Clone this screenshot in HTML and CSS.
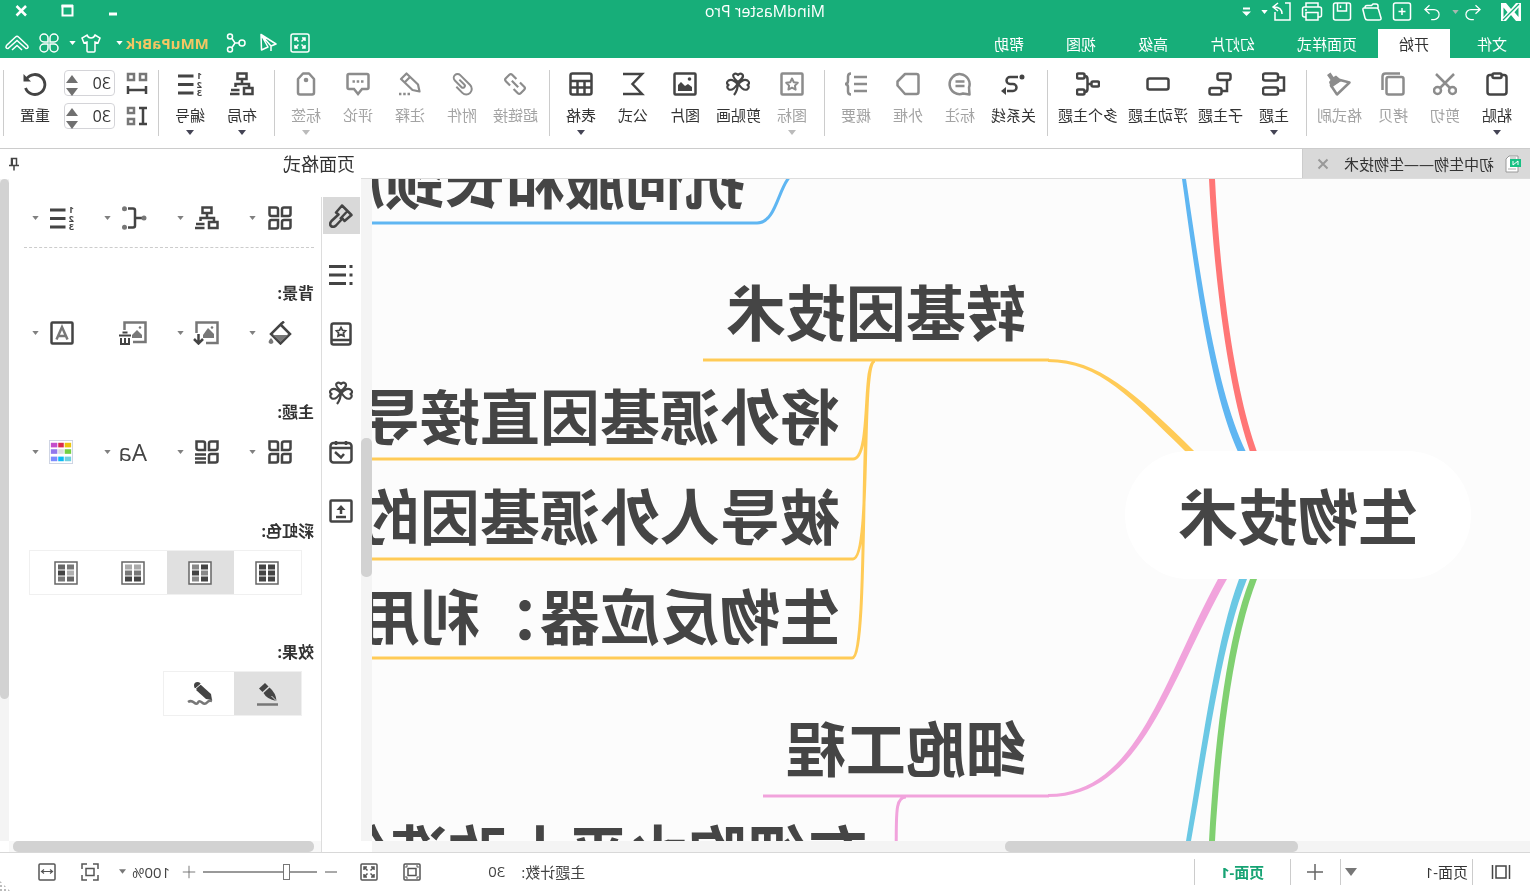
FILE: index.html
```html
<!DOCTYPE html>
<html lang="zh-CN">
<head>
<meta charset="utf-8">
<title>MindMaster Pro</title>
<link rel="stylesheet" href="styles.css">
</head>
<body>
<svg class="sprite" aria-hidden="true">
  <!-- title bar -->
  <symbol id="logo" viewBox="0 0 24 24"><path d="M2 3h5l5 6 5-6h5v18h-5l-5-6-5 6H2z" fill="#fff" stroke="none"/><path d="M4.500 7.500v9.500l4-4.700zM19.500 7.500v9.500l-4-4.700z" fill="#17ae79" stroke="none"/><path d="M4 4l16 16" stroke="#17ae79" stroke-width="1.200"/></symbol>
  <symbol id="undo" viewBox="0 0 24 24"><path d="M9 4L3.500 9l5.500 5M4 9h10.500a6 6 0 0 1 0 12H11" /></symbol>
  <symbol id="redo" viewBox="0 0 24 24"><path d="M15 4l5.500 5-5.500 5M20 9H9.500a6 6 0 0 0 0 12H13"/></symbol>
  <symbol id="new" viewBox="0 0 24 24"><rect x="3.500" y="3" width="17" height="17" rx="2"/><path d="M12 8v7M8.500 11.500h7"/></symbol>
  <symbol id="folder" viewBox="0 0 24 24"><path d="M5.500 9.500q.5-1.500 2-1.500H20q1.500 0 1 2l-2 8q-.5 2-2.500 2H5q-2.500 0-2-2zM6 8V6q0-2 2-2h3l1.500 1.500H17q2 0 2 2"/></symbol>
  <symbol id="save" viewBox="0 0 24 24"><rect x="3.500" y="3" width="17" height="17" rx="2"/><path d="M7.500 3v8h9V3M13.500 5.500V8"/></symbol>
  <symbol id="print" viewBox="0 0 24 24"><path d="M6 7V3h12v4M6 17H4.500q-2 0-2-2V9q0-2 2-2h15q2 0 2 2v6q0 2-2 2H18M6 12.500h12V20H6zM17 10h2"/></symbol>
  <symbol id="export" viewBox="0 0 24 24"><path d="M9 3H4v17h15v-8M12 14q0-7 8-7M16 3l5 4-5 4"/></symbol>
  <symbol id="min" viewBox="0 0 24 24"><path d="M8 14h8" stroke-width="3"/></symbol>
  <symbol id="max" viewBox="0 0 24 24"><rect x="6.500" y="6" width="10" height="9.500"/><path d="M6 6h11.500" stroke-width="3"/></symbol>
  <symbol id="close" viewBox="0 0 24 24"><path d="M7 6l9.500 9.500m0-9.500L7 15.500" stroke-width="2.500"/></symbol>
  <symbol id="expand" viewBox="0 0 24 24"><rect x="3" y="3" width="18" height="18" rx="2"/><path d="M7 10V7h3M14 7h3v3M17 14v3h-3M10 17H7v-3M7 7l3.500 3.500M17 7l-3.500 3.500M17 17l-3.500-3.500M7 17l3.500-3.500"/></symbol>
  <symbol id="send" viewBox="0 0 24 24"><path d="M19 3.500L4 13l5 2 10-11.500L18.500 19 12 16zM9 15v5" stroke-linejoin="round"/></symbol>
  <symbol id="share" viewBox="0 0 24 24"><circle cx="6" cy="12" r="3"/><circle cx="18" cy="5.500" r="2.500"/><circle cx="18" cy="18.500" r="2.500"/><path d="M9 12h4l3-4.500M13 12l3 4.500"/></symbol>
  <symbol id="shirt" viewBox="0 0 24 24"><path d="M8 4L3 7l2 5 3-1v9q0 1 1 1h6q1 0 1-1v-9l3 1 2-5-5-3q-1 3-4 3T8 4z"/></symbol>
  <symbol id="cmd" viewBox="0 0 24 24"><path d="M11 8V7a4 4 0 1 0-4 4h4zM13 8V7a4 4 0 1 1 4 4h-4zM11 15v2a4 4 0 1 1-4-4h4zM13 15v2a4 4 0 1 0 4-4h-4z"/></symbol>
  <symbol id="collapse" viewBox="0 0 24 24"><path d="M1.500 14.500L10.500 6q1.500-1.500 3 0l9 8.500q1.500 3-1.500 3L12 9.500l-9 8q-3 0-1.500-3zM7 19l5-4.500 5 4.500"/></symbol>
  <symbol id="more" viewBox="0 0 10 10"><path d="M1 1.500h7" /><path d="M0 4.500h9L4.500 9z" fill="#fff" stroke="none"/></symbol>
  <symbol id="caret" viewBox="0 0 8 5"><path d="M0 0h8L4 5z" fill="currentColor" stroke="none"/></symbol>
  <symbol id="caret-up" viewBox="0 0 12 8"><path d="M0 8h12L6 0z" fill="currentColor" stroke="none"/></symbol>
  <symbol id="caret-down" viewBox="0 0 12 8"><path d="M0 0h12L6 8z" fill="currentColor" stroke="none"/></symbol>
  <!-- ribbon -->
  <symbol id="paste" viewBox="0 0 24 24"><rect x="2.500" y="3" width="19" height="19.500" rx="2.500"/><rect x="7.500" y="1.500" width="9" height="4.500" rx="1.500" fill="#fff"/></symbol>
  <symbol id="cut" viewBox="0 0 24 24"><circle cx="4.500" cy="18.500" r="3.500"/><circle cx="19.500" cy="18.500" r="3.500"/><path d="M3 2l14 14M21 2L7 16"/></symbol>
  <symbol id="copy" viewBox="0 0 24 24"><rect x="1.500" y="5" width="17" height="17.500" rx="2"/><path d="M5 1.500h14.500q3 0 3 3V18"/></symbol>
  <symbol id="painter" viewBox="0 0 24 24"><path d="M11 8L1.500 10.500 14 22.500l6-9z" stroke-linejoin="round"/><path d="M9 8.500l6-5 2.500 1.500 3-4.500L24 3l-3.500 5 1.500 2-2 6z" fill="currentColor" stroke="none"/></symbol>
  <symbol id="topic" viewBox="0 0 24 24"><rect x="8" y="1.500" width="15" height="7" rx="2"/><rect x="8" y="15.500" width="15" height="7" rx="2"/><path d="M8 5.500H2v13h6"/></symbol>
  <symbol id="subtopic" viewBox="0 0 24 24"><rect x="1.500" y="1.500" width="13" height="6.500" rx="2"/><rect x="10.500" y="16" width="12" height="6.500" rx="2"/><path d="M5 8v11h5.500"/></symbol>
  <symbol id="floating" viewBox="0 0 24 24"><rect x="1.500" y="6.500" width="21" height="11" rx="2"/></symbol>
  <symbol id="multi" viewBox="0 0 24 24"><rect x="1" y="9.500" width="7.500" height="5" rx="1.500"/><rect x="15.500" y="1.500" width="7.500" height="5" rx="1.500"/><rect x="15.500" y="17.500" width="7.500" height="5" rx="1.500"/><path d="M9 12h4M15.500 4q-3 0-3 3v10q0 3 3 3"/></symbol>
  <symbol id="relation" viewBox="0 0 24 24"><circle cx="3" cy="5" r="2.500" fill="currentColor" stroke="none"/><path d="M7 5h8a3.500 3.500 0 0 1 0 7h-3a3.500 3.500 0 0 0 0 7h6"/><path d="M19 15l5 4-5 4z" fill="currentColor" stroke="none"/></symbol>
  <symbol id="callout" viewBox="0 0 24 24"><path d="M2.500 22.500l.5-7A10 10 0 1 1 9 21.500z" stroke-linejoin="round"/><path d="M7.500 9.500h9M7.500 14h9"/></symbol>
  <symbol id="boundary" viewBox="0 0 24 24"><path d="M3.500 2H15l7.500 7.500v4L15 22H3.500q-2 0-2-2V4q0-2 2-2z" stroke-linejoin="round"/></symbol>
  <symbol id="summary" viewBox="0 0 24 24"><path d="M1 5h13M1 12h13M1 19h13M17 1.500q3 0 3 3V9q0 3 3 3-3 0-3 3v4.500q0 3-3 3"/></symbol>
  <symbol id="staricon" viewBox="0 0 24 24"><rect x="1.500" y="1.500" width="21" height="21" rx="1"/><path d="M12 6.500l1.800 3.700 4 .6-2.900 2.800.7 4-3.600-1.900-3.600 1.900.7-4-2.900-2.800 4-.6z" stroke-linejoin="round" stroke-width="2"/></symbol>
  <symbol id="clover" viewBox="0 0 24 24"><path d="M12 10C8 7 6 5 7.500 2.500Q10 .5 12 3q2-2.500 4.500-.5Q18 5 12 10zM11.500 12C8 8 5 7 2.500 8.500 0 10.500 1 12 2.500 13 1 14 .5 16 3 17.500q4 1.500 8.500-5.500zM12.500 12C16 8 19 7 21.500 8.500 24 10.500 23 12 21.500 13c1.500 1 2 3-.5 4.500q-4 1.500-8.500-5.500zM12 10q0 8 4 13" stroke-linejoin="round" stroke-width="2.200"/></symbol>
  <symbol id="picture" viewBox="0 0 24 24"><rect x="1.500" y="1.500" width="21" height="21" rx="1"/><path d="M5 19v-4l4-3 3 2 4-4 3 3v6z" fill="currentColor" stroke="none"/><circle cx="7.500" cy="7" r="1.800" fill="currentColor" stroke="none"/></symbol>
  <symbol id="sigma" viewBox="0 0 24 24"><path d="M22 2H3l9.500 10L3 22h19"/></symbol>
  <symbol id="table" viewBox="0 0 24 24"><rect x="1.500" y="1.500" width="21" height="21" rx="2"/><path d="M2 9h20M2 15.500h20M8.500 9v13M15.500 9v13"/></symbol>
  <symbol id="link" viewBox="0 0 24 24"><path d="M9.500 7.500h-6q-2 0-2 2v5q0 2 2 2h6M14.500 7.500h6q2 0 2 2v5q0 2-2 2h-6M7.500 12h9" transform="rotate(-45 12 12)" stroke-width="2.200"/></symbol>
  <symbol id="clip" viewBox="0 0 24 24"><path d="M14 18H5.500a5.500 5.500 0 0 1 0-11H19.500a3.800 3.800 0 0 1 0 7.600H10a1.800 1.800 0 0 1 0-3.800h7" transform="rotate(-45 12 12)" stroke-width="2"/></symbol>
  <symbol id="pencil" viewBox="0 0 24 24"><path d="M2.500 19.500l1.500-7L15.500 1.500l5.500 5.500L9.500 18zM12 5l5.500 5.500" stroke-linejoin="round" stroke-width="2.200"/><path d="M12 22h11" stroke-dasharray="2.500 1.800"/></symbol>
  <symbol id="comment" viewBox="0 0 24 24"><path d="M3 2h18q1.500 0 1.500 1.500v12q0 1.500-1.500 1.500h-5l-4 5-4-5H3q-1.500 0-1.500-1.500v-12Q1.500 2 3 2z"/><path d="M6.500 9.500h11" stroke-dasharray="2.500 1.800"/></symbol>
  <symbol id="tag" viewBox="0 0 24 24"><path d="M4 7l5-5.500h6L20 7v13.500q0 2-2 2H6q-2 0-2-2z" stroke-linejoin="round"/><circle cx="12" cy="8" r="2.300" fill="currentColor" stroke="none"/></symbol>
  <symbol id="layout" viewBox="0 0 24 24"><rect x="7.500" y="1.500" width="9" height="5.500"/><path d="M12 7v5M5 16v-4h13.500v3M14.500 18H23M14.500 22H24"/><rect x="1.500" y="16" width="8.500" height="6"/></symbol>
  <symbol id="numbered" viewBox="0 0 24 24"><path d="M8.500 4H24M8.500 12.500H24M8.500 21H24" stroke-width="3"/><g fill="currentColor" stroke="none" font-family="Open Sans, sans-serif" font-size="9" font-weight="700"><text x="0" y="7">1</text><text x="0" y="15.500">2</text><text x="0" y="24">3</text></g></symbol>
  <symbol id="gap-h" viewBox="0 0 24 24"><g stroke="#777"><rect x="3" y="3" width="6" height="6"/><rect x="15" y="3" width="6" height="6"/></g><path d="M3 15v8M21 15v8M3 19h18"/></symbol>
  <symbol id="gap-v" viewBox="0 0 24 24"><g stroke="#777"><rect x="15" y="4" width="6" height="5"/><rect x="15" y="15" width="6" height="5"/></g><path d="M2 4h8M2 20h8M6 4v16"/></symbol>
  <symbol id="reset" viewBox="0 0 24 24"><path d="M3.500 7a10 10 0 1 1-1 9" stroke-width="2.800" transform="matrix(-1 0 0 1 24 0)"/><path d="M23.500 2v7.500H16z" fill="currentColor" stroke="none"/></symbol>
  <!-- document tab and panel -->
  <symbol id="doc" viewBox="0 0 16 18"><path d="M3 1h9l3 3v13H3z" fill="#fff" stroke="#999"/><path d="M5 3h6M5 14h8" stroke="#aaa"/><rect x="0" y="4" width="11" height="8" fill="#17c184" stroke="none"/><path d="M3 10V6l5 4V6" stroke="#fff"/></symbol>
  <symbol id="x" viewBox="0 0 12 12"><path d="M1.500 1.500l9 9m0-9l-9 9"/></symbol>
  <symbol id="pin" viewBox="0 0 12 14"><path d="M3.500 1.500h5v7h-5zM1 8.500h10M6 9v4.500" stroke-width="1.500"/><path d="M8 1v7"/></symbol>
  <symbol id="brush" viewBox="0 0 24 24"><path d="M11 1.500l6 7-2.500 2 7 6.500q2.500 3 .5 5t-5-.5l-6.500-7-2 2.500-7-6zM5.500 7l7.500 8" stroke-linejoin="round"/></symbol>
  <symbol id="outline" viewBox="0 0 24 24"><path d="M7 3.500h17M7 12h17M7 20.500h17" stroke-width="3"/><path d="M.5 3.500h3M.5 12h3M.5 20.500h3" stroke-width="3"/></symbol>
  <symbol id="starbook" viewBox="0 0 24 24"><rect x="2.500" y="1.500" width="19" height="21" rx="2"/><path d="M3 18h18"/><path d="M12 5.500l1.500 2.800 3 .5-2.100 2.200.5 3-2.900-1.400L9.100 14l.5-3-2.100-2.200 3-.5z" stroke-width="1.800"/></symbol>
  <symbol id="calendar" viewBox="0 0 24 24"><rect x="1.500" y="3" width="21" height="19.500" rx="3"/><path d="M2 8h20M7 1v4M17 1v4M18 12l-6 5.500-3-3.500"/></symbol>
  <symbol id="upload" viewBox="0 0 24 24"><rect x="1.500" y="1.500" width="21" height="21" rx="1"/><path d="M12 15V8M7 18h10"/><path d="M7.500 11L12 6l4.500 5z" fill="currentColor" stroke="none"/></symbol>
  <symbol id="grid4" viewBox="0 0 24 24"><path d="M1.500 1.500h6.500q2 0 2 2V10H3.500q-2 0-2-2zM14 3.500q0-2 2-2h6.500V8q0 2-2 2H14zM1.500 14H8q2 0 2 2v6.500H3.500q-2 0-2-2zM14 14h6.500q2 0 2 2v6.500H16q-2 0-2-2z"/></symbol>
  <symbol id="gridlist" viewBox="0 0 24 24"><path d="M1.500 1.500h6.500q2 0 2 2V10H3.500q-2 0-2-2zM14 3.500q0-2 2-2h6.500V8q0 2-2 2H14zM1.500 14H8q2 0 2 2v6.500H3.500q-2 0-2-2zM13 14.500h11M13 18.500h11M13 22.500h11"/></symbol>
  <symbol id="branch" viewBox="0 0 26 24"><path d="M5 12h6M19 2.500h-5q-2 0-2 2v15q0 2 2 2h5"/><g fill="#777" stroke="none"><circle cx="3" cy="12" r="2.500"/><circle cx="22.500" cy="2.800" r="2.500"/><circle cx="22.500" cy="21.200" r="2.500"/></g></symbol>
  <symbol id="fill" viewBox="0 0 24 24"><path d="M11.500 3.500L2 13l9.500 9.500 9.500-9.500zM11.500 3.500L8 .5"/><path d="M4 14h15l-7.500 7z" fill="#777" stroke="none"/><path d="M21 17q5 5 0 6-5-1 0-6z" fill="#777" stroke="none"/></symbol>
  <symbol id="picdown" viewBox="0 0 26 24"><path d="M13 22H1.500V1.500h21V12" stroke="#777"/><path d="M5 17v-4l6-6 5 7v3z" fill="#777" stroke="none"/><circle cx="7" cy="6.500" r="1.300" fill="#777" stroke="none"/><path d="M20.500 13v9M16 18l4.500 4.500L25 18"/></symbol>
  <symbol id="picdel" viewBox="0 0 28 24"><path d="M14 21H1.500V1.500h21V9" stroke="#777"/><path d="M5 17v-3l5-5 5 5v3z" fill="#777" stroke="none"/><circle cx="7" cy="6.500" r="1.300" fill="#777" stroke="none"/><path d="M16 14.500h12M19.500 11.500h5" stroke-width="2"/><path d="M18 17v6h8v-6M22 17v6" stroke-width="2"/></symbol>
  <symbol id="letter" viewBox="0 0 24 24"><rect x="1.500" y="1.500" width="21" height="21" rx="1"/><path d="M6.500 18.500L12 6l5.500 12.500M8.500 15h7" stroke="#777"/></symbol>
  <symbol id="palette" viewBox="0 0 26 26"><rect x=".5" y=".5" width="25" height="25" fill="#fff" stroke="#ccd2e2" stroke-width="1"/><g stroke="none"><path d="M2 3h7v5H2z" fill="#ecc40d"/><path d="M10 3h6v5h-6z" fill="#d92d4e"/><path d="M17 3h7v5h-7z" fill="#c44dcb"/><path d="M2 10h7v5H2z" fill="#74cf42"/><path d="M10 10h6v5h-6z" fill="#ddd"/><path d="M17 10h7v5h-7z" fill="#9278ec"/><path d="M2 18h7v5H2z" fill="#6fcfe0"/><path d="M10 18h6v5h-6z" fill="#0bbcf2"/><path d="M17 18h7v5h-7z" fill="#7c8cff"/></g></symbol>
  <symbol id="rb-frame" viewBox="0 0 24 24"><rect x="1" y="1" width="22" height="22" fill="#fff" stroke="#666" stroke-width="1.500"/></symbol>
  <symbol id="pen" viewBox="0 0 24 24"><path d="M1 22.500h21" stroke="#777" stroke-width="2.500"/><g fill="currentColor" stroke="none"><path d="M14 1l6 5.500-3.500 3.500-6-5.500z"/><path d="M9.500 5.500l6 5.500q-3 6-13 8 .5-8 7-13.500z"/></g><path d="M2.500 19l5-5" stroke="#e0e0e0" stroke-width="1"/></symbol>
  <symbol id="sketch" viewBox="0 0 26 24"><path d="M1 19q3-1 5 1.500t5 0 4 0 4 0 6-.5" stroke="#777" stroke-width="2.500"/><path d="M2 12L12 3l5 5-10 9-6 1z" fill="currentColor" stroke="none"/><circle cx="15.500" cy="3.500" r="3.500" fill="currentColor" stroke="none"/><path d="M12 2l6 5" stroke="#fff" stroke-width="1"/></symbol>
  <!-- status bar -->
  <symbol id="pages" viewBox="0 0 20 18"><rect x="5" y="3" width="10" height="12"/><path d="M1.500 2v14M18.500 2v14"/></symbol>
  <symbol id="plus" viewBox="0 0 18 18"><path d="M9 1v16M1 9h16"/></symbol>
  <symbol id="minus" viewBox="0 0 14 14"><path d="M1 7h12"/></symbol>
  <symbol id="fitpage" viewBox="0 0 18 18"><rect x="1" y="1" width="16" height="16" rx="1"/><rect x="5" y="5.500" width="8" height="7"/><path d="M3 5V3h2M13 3h2v2M15 13v2h-2M5 15H3v-2" stroke-width="1"/></symbol>
  <symbol id="full" viewBox="0 0 18 18"><rect x="1" y="1" width="16" height="16" rx="1"/><path d="M4 7V4h3M11 4h3v3M14 11v3h-3M7 14H4v-3M4 4l3.500 3.500M14 4l-3.500 3.500M14 14l-3.500-3.500M4 14l3.500-3.500"/></symbol>
  <symbol id="focus" viewBox="0 0 18 18"><path d="M1 6V1h5M12 1h5v5M17 12v5h-5M6 17H1v-5"/><rect x="5" y="5.500" width="8" height="7"/></symbol>
  <symbol id="fitwidth" viewBox="0 0 18 18"><rect x="1" y="1" width="16" height="16" rx="1"/><path d="M3.500 8.500h11M6 6.500l-2.500 2L6 10.500M12 6.500l2.500 2-2.500 2" stroke-width="1.200"/></symbol>
</svg>

<div class="app">
  <header class="top">
    <div class="titlebar">
      <div class="quick">
        <svg class="i24"><use href="#logo"/></svg>
        <button class="q" aria-label="撤销"><svg class="i20"><use href="#undo"/></svg></button>
        <svg class="caret faint"><use href="#caret"/></svg>
        <button class="q" aria-label="重做"><svg class="i20"><use href="#redo"/></svg></button>
        <button class="q" aria-label="新建"><svg class="i24"><use href="#new"/></svg></button>
        <button class="q" aria-label="打开"><svg class="i24"><use href="#folder"/></svg></button>
        <button class="q" aria-label="保存"><svg class="i24"><use href="#save"/></svg></button>
        <button class="q" aria-label="打印"><svg class="i24"><use href="#print"/></svg></button>
        <button class="q exp" aria-label="导出"><svg class="i24"><use href="#export"/></svg><svg class="caret"><use href="#caret"/></svg></button>
        <svg class="i10"><use href="#more"/></svg>
      </div>
      <h1 class="title">MindMaster Pro</h1>
      <div class="winctl">
        <button aria-label="最小化"><svg class="i24"><use href="#min"/></svg></button>
        <button aria-label="最大化"><svg class="i24"><use href="#max"/></svg></button>
        <button aria-label="关闭"><svg class="i24"><use href="#close"/></svg></button>
      </div>
    </div>
    <div class="menubar">
      <nav class="tabs">
        <button class="tab file">文件</button><button class="tab active">开始</button><button class="tab">页面样式</button><button class="tab">幻灯片</button><button class="tab">高级</button><button class="tab">视图</button><button class="tab">帮助</button>
      </nav>
      <div class="account">
        <button aria-label="全屏"><svg class="i24"><use href="#expand"/></svg></button>
        <button aria-label="发送"><svg class="i24"><use href="#send"/></svg></button>
        <button aria-label="分享"><svg class="i24"><use href="#share"/></svg></button>
        <button class="user">MMuPaBrk <svg class="caret"><use href="#caret"/></svg></button>
        <button class="skin" aria-label="皮肤"><svg class="i24"><use href="#shirt"/></svg><svg class="caret"><use href="#caret"/></svg></button>
        <button aria-label="应用"><svg class="i24"><use href="#cmd"/></svg></button>
        <button aria-label="收起"><svg class="i24"><use href="#collapse"/></svg></button>
      </div>
    </div>
  </header>

  <section class="ribbon">
    <button class="cmd"><svg class="i24"><use href="#paste"/></svg>粘贴<svg class="caret"><use href="#caret"/></svg></button>
    <button class="cmd off"><svg class="i24"><use href="#cut"/></svg>剪切</button>
    <button class="cmd off"><svg class="i24"><use href="#copy"/></svg>拷贝</button>
    <button class="cmd off"><svg class="i24"><use href="#painter"/></svg>格式刷</button>
    <i class="sep"></i>
    <button class="cmd"><svg class="i24"><use href="#topic"/></svg>主题<svg class="caret"><use href="#caret"/></svg></button>
    <button class="cmd"><svg class="i24"><use href="#subtopic"/></svg>子主题</button>
    <button class="cmd"><svg class="i24"><use href="#floating"/></svg>浮动主题</button>
    <button class="cmd"><svg class="i24"><use href="#multi"/></svg>多个主题</button>
    <i class="sep"></i>
    <button class="cmd"><svg class="i24"><use href="#relation"/></svg>关系线</button>
    <button class="cmd off"><svg class="i24"><use href="#callout"/></svg>标注</button>
    <button class="cmd off"><svg class="i24"><use href="#boundary"/></svg>外框</button>
    <button class="cmd off"><svg class="i24"><use href="#summary"/></svg>概要</button>
    <i class="sep"></i>
    <button class="cmd off"><svg class="i24"><use href="#staricon"/></svg>图标<svg class="caret"><use href="#caret"/></svg></button>
    <button class="cmd"><svg class="i24"><use href="#clover"/></svg>剪贴画</button>
    <button class="cmd"><svg class="i24"><use href="#picture"/></svg>图片</button>
    <button class="cmd"><svg class="i24"><use href="#sigma"/></svg>公式</button>
    <button class="cmd"><svg class="i24"><use href="#table"/></svg>表格<svg class="caret"><use href="#caret"/></svg></button>
    <i class="sep"></i>
    <button class="cmd off"><svg class="i24"><use href="#link"/></svg>超链接</button>
    <button class="cmd off"><svg class="i24"><use href="#clip"/></svg>附件</button>
    <button class="cmd off"><svg class="i24"><use href="#pencil"/></svg>注释</button>
    <button class="cmd off"><svg class="i24"><use href="#comment"/></svg>评论</button>
    <button class="cmd off"><svg class="i24"><use href="#tag"/></svg>标签<svg class="caret"><use href="#caret"/></svg></button>
    <i class="sep"></i>
    <button class="cmd"><svg class="i24"><use href="#layout"/></svg>布局<svg class="caret"><use href="#caret"/></svg></button>
    <button class="cmd"><svg class="i24"><use href="#numbered"/></svg>编号<svg class="caret"><use href="#caret"/></svg></button>
    <i class="sep"></i>
    <div class="gaps">
      <label class="gap"><svg class="i24"><use href="#gap-h"/></svg><span class="spin"><input type="number" value="30" aria-label="水平间距"><span class="arrows"><svg><use href="#caret-up"/></svg><svg><use href="#caret-down"/></svg></span></span></label>
      <label class="gap"><svg class="i24"><use href="#gap-v"/></svg><span class="spin"><input type="number" value="30" aria-label="垂直间距"><span class="arrows"><svg><use href="#caret-up"/></svg><svg><use href="#caret-down"/></svg></span></span></label>
    </div>
    <button class="cmd"><svg class="i24"><use href="#reset"/></svg>重置</button>
    <i class="sep last"></i>
  </section>

  <main class="work">
    <section class="editor">
      <div class="doctabs">
        <div class="doctab"><svg class="docicon"><use href="#doc"/></svg><span>初中生物——生物技术</span><button aria-label="关闭文档"><svg class="i12"><use href="#x"/></svg></button></div>
      </div>
      <div class="stage">
        <div class="canvas">
          <svg class="wires">
            <g fill="#ff7676"><path d="M315 0C311 86 297 209 273 273H280C303 209 317 86 321 0z"/></g>
            <g fill="#5fb6f2"><path d="M344 0C331 86 315 211 284 273H292C321 211 336 86 348 0z"/></g>
            <g fill="#ffcb57"><path d="M482 180C432 180 396 213 335 273H344C400 219 430 183 482 183z"/></g>
            <g fill="#f1a3dc"><path d="M482 618C388 618 361 502 303 400H312C367 500 393 615 482 615z"/></g>
            <g fill="#6bc8e4"><path d="M283 400C308 461 322 566 339 662H344C328 566 314 461 291 400z"/></g>
            <g fill="#80d071"><path d="M273 400C297 461 310 566 315 662H321C316 566 304 461 280 400z"/></g>
            <g fill="none" stroke-width="3">
              <path d="M730-7C752-7 750 44 773 44H4000" stroke="#5fb6f2"/>
              <path d="M481 181H827M655 182C668 182 658 280 677 280H4000M655 182C670 182 658 380 677 380H4000M655 182C672 182 660 479 678 479H4000" stroke="#ffcb57"/>
              <path d="M481 617H767M624 618C636 618 633 640 634 670" stroke="#f1a3dc"/>
            </g>
          </svg>
          <div class="node root">生物技术</div>
          <div class="node n1">抗伺服和长颈鹿</div>
          <div class="node n2">转基因技术</div>
          <div class="node n3">将外源基因直接导</div>
          <div class="node n4">被导人外源基因的</div>
          <div class="node n5">生物反应器：利用</div>
          <div class="node n6">细胞工程</div>
          <div class="node n7">在细胞水平上改造细</div>
        </div>
        <div class="vtrack"><div class="vthumb"></div></div>
        <div class="htrack"><div class="hthumb"></div></div>
      </div>
    </section>

    <aside class="panel">
      <div class="phead"><h2>页面格式</h2><button aria-label="固定"><svg class="pinicon"><use href="#pin"/></svg></button></div>
      <div class="pbody">
        <nav class="rail">
          <button class="on" aria-label="格式"><svg class="i24"><use href="#brush"/></svg></button>
          <button aria-label="大纲"><svg class="i24"><use href="#outline"/></svg></button>
          <button aria-label="图标"><svg class="i24"><use href="#starbook"/></svg></button>
          <button aria-label="剪贴画"><svg class="i24"><use href="#clover"/></svg></button>
          <button aria-label="任务"><svg class="i24"><use href="#calendar"/></svg></button>
          <button aria-label="上传"><svg class="i24"><use href="#upload"/></svg></button>
        </nav>
        <div class="pcol">
          <div class="props">
            <div class="row first">
              <button class="opt"><svg class="i24"><use href="#grid4"/></svg><svg class="caret"><use href="#caret"/></svg></button>
              <button class="opt"><svg class="i24"><use href="#layout"/></svg><svg class="caret"><use href="#caret"/></svg></button>
              <button class="opt"><svg class="i26"><use href="#branch"/></svg><svg class="caret"><use href="#caret"/></svg></button>
              <button class="opt"><svg class="i24"><use href="#numbered"/></svg><svg class="caret"><use href="#caret"/></svg></button>
            </div>
            <h3>背景:</h3>
            <div class="row">
              <button class="opt"><svg class="i24"><use href="#fill"/></svg><svg class="caret"><use href="#caret"/></svg></button>
              <button class="opt"><svg class="i26"><use href="#picdown"/></svg><svg class="caret"><use href="#caret"/></svg></button>
              <button class="opt"><svg class="i28"><use href="#picdel"/></svg></button>
              <button class="opt"><svg class="i24"><use href="#letter"/></svg><svg class="caret"><use href="#caret"/></svg></button>
            </div>
            <h3>主题:</h3>
            <div class="row">
              <button class="opt"><svg class="i24"><use href="#grid4"/></svg><svg class="caret"><use href="#caret"/></svg></button>
              <button class="opt"><svg class="i24"><use href="#gridlist"/></svg><svg class="caret"><use href="#caret"/></svg></button>
              <button class="opt"><span class="aa">Aa</span><svg class="caret"><use href="#caret"/></svg></button>
              <button class="opt"><svg class="i26"><use href="#palette"/></svg><svg class="caret"><use href="#caret"/></svg></button>
            </div>
            <h3>彩虹色:</h3>
            <div class="seg">
              <button aria-label="单色"><svg class="i24" viewBox="0 0 24 24"><use href="#rb-frame"/><path d="M4 6h7M13 6h7M4 12h7M13 12h7M4 18h7M13 18h7" stroke="#444" stroke-width="5"/></svg></button>
              <button class="on" aria-label="交替"><svg class="i24" viewBox="0 0 24 24"><use href="#rb-frame"/><path d="M4 6h7M13 12h7M4 18h7" stroke="#444" stroke-width="5"/><path d="M13 6h7M4 12h7M13 18h7" stroke="#888" stroke-width="5"/></svg></button>
              <button aria-label="渐变"><svg class="i24" viewBox="0 0 24 24"><use href="#rb-frame"/><path d="M4 6h7M13 6h7" stroke="#aaa" stroke-width="5"/><path d="M4 12h7M13 12h7" stroke="#777" stroke-width="5"/><path d="M4 18h7M13 18h7" stroke="#444" stroke-width="5"/></svg></button>
              <button aria-label="多色"><svg class="i24" viewBox="0 0 24 24"><use href="#rb-frame"/><path d="M4 6h7M13 18h7" stroke="#777" stroke-width="5"/><path d="M4 12h7" stroke="#b0b0b0" stroke-width="5"/><path d="M13 6h7M4 18h7" stroke="#666" stroke-width="5"/><path d="M13 12h7" stroke="#444" stroke-width="5"/></svg></button>
            </div>
            <h3>效果:</h3>
            <div class="seg">
              <button class="on" aria-label="直线"><svg class="i24"><use href="#pen"/></svg></button>
              <button aria-label="手绘"><svg class="i26"><use href="#sketch"/></svg></button>
            </div>
          </div>
          <div class="ptrack"><div class="pthumb"></div></div>
        </div>
        <div class="pvtrack"><div class="pvthumb"></div></div>
      </div>
    </aside>
  </main>

  <footer class="status">
    <button class="pagesbtn" aria-label="页面"><svg class="pagesicon"><use href="#pages"/></svg></button>
    <label class="pagepick"><select aria-label="当前页面"><option>页面-1</option></select><svg><use href="#caret-down"/></svg></label>
    <button class="addpage" aria-label="添加页面"><svg class="i18"><use href="#plus"/></svg></button>
    <button class="pagetab">页面-1</button>
    <p class="count"><span>主题计数:</span><span>30</span></p>
    <div class="view">
      <button aria-label="适合页面"><svg class="i18 strong"><use href="#fitpage"/></svg></button>
      <button aria-label="全屏"><svg class="i18 strong"><use href="#full"/></svg></button>
      <div class="zoom">
        <button aria-label="缩小"><svg class="i14"><use href="#minus"/></svg></button>
        <input type="range" min="0" max="100" value="25" aria-label="缩放">
        <button aria-label="放大"><svg class="i14"><use href="#plus"/></svg></button>
      </div>
      <button class="pct">100% <svg class="caret"><use href="#caret"/></svg></button>
      <button aria-label="聚焦"><svg class="i18 strong"><use href="#focus"/></svg></button>
      <button aria-label="适合宽度"><svg class="i18 strong"><use href="#fitwidth"/></svg></button>
    </div>
    <i class="grip"></i>
  </footer>
</div>
</body>
</html>
```

FILE: styles.css
```css
* { box-sizing: border-box; }
body {
  margin: 0;
  font-family: "Open Sans", "Noto Sans CJK SC", sans-serif;
  font-size: 15px;
  color: #333;
  background: #fff;
  overflow: hidden;
}
button {
  font: inherit;
  color: inherit;
  background: none;
  border: 0;
  padding: 0;
  margin: 0;
}
h1, h2, h3, p { margin: 0; font-weight: 400; }
svg { display: block; flex: none; fill: none; stroke: currentColor; stroke-width: 2.5; }
.sprite { display: none; }
.i10 { width: 10px; height: 10px; stroke-width: 2; }
.i12 { width: 12px; height: 12px; stroke-width: 2; }
.i14 { width: 14px; height: 14px; stroke-width: 1; }
.i18 { width: 18px; height: 18px; stroke-width: 2; }
.i20 { width: 20px; height: 20px; }
.i24 { width: 24px; height: 24px; }
.i26 { width: 26px; height: 24px; }
.i28 { width: 28px; height: 24px; }
.caret { width: 8px; height: 5px; }

/* The whole window is shown mirrored. */
.app {
  display: flex;
  flex-direction: column;
  height: 100vh;
  transform: scaleX(-1);
}

.top { background: #17ae79; color: #fff; }
.top .i24, .top .i20 { stroke-width: 1.5; }
.titlebar {
  display: grid;
  grid-template-columns: 1fr auto 1fr;
  align-items: center;
  height: 24px;
}
.quick { display: flex; align-items: center; gap: 6px; padding-left: 7px; }
.quick .caret { width: 7px; height: 4px; }
.quick .faint { color: #a7b8b0; margin: 0 4px 0 -2px; }
.quick .faint + .q { margin-right: 2px; }
.quick > .i24 { margin-right: 10px; }
.exp { display: flex; align-items: center; gap: 2px; }
.quick .i10 { margin-left: 4px; }
.title { font-size: 16px; line-height: 22px; margin-bottom: 2px; }
.winctl { display: flex; justify-content: flex-end; gap: 22px; padding-right: 9px; }
.winctl .i24 { stroke-width: 2; }
.menubar { display: flex; justify-content: space-between; height: 34px; }
.tabs { display: flex; align-items: flex-end; padding-left: 2px; }
.tab { height: 29px; padding: 0 21px; }
.tab.file { margin-right: 6px; }
.tab.active { background: #fff; color: #333; }
.account { display: flex; align-items: center; gap: 8px; padding: 4px 5px 0 0; }
.account .caret { width: 7px; height: 4px; }
.user { display: flex; align-items: center; gap: 3px; font-size: 15px; font-weight: 700; color: #f4c663; padding: 0 5px 0 7px; }
.user .caret { color: #fff; }
.skin { display: flex; align-items: center; gap: 3px; }

.ribbon {
  display: flex;
  align-items: stretch;
  height: 91px;
  padding-left: 7px;
  border-bottom: 1px solid #ccc;
  color: #444;
}
.ribbon > * { flex-shrink: 0; }
.cmd {
  display: flex;
  flex-direction: column;
  align-items: center;
  min-width: 52px;
  padding: 14px 5px 0;
  line-height: 20px;
  color: #333;
  white-space: nowrap;
}
.cmd .i24 { margin-bottom: 9px; color: #444; }
.cmd .caret { margin-top: 5px; color: #445; }
.cmd.off { color: #a3a3a3; }
.cmd.off .i24 { color: #8c8c8c; }
.cmd.off .caret { color: #bbb; }
.sep { width: 1px; margin: 12px 6px 12px 5px; background: #ccc; }
.sep.last { margin-right: 0; }
.gaps { display: flex; flex-direction: column; gap: 7px; padding: 12px 3px 0; }
.gap { display: flex; align-items: center; gap: 10px; }
.spin {
  display: flex;
  align-items: center;
  width: 51px;
  height: 26px;
  border: 1px solid #d4d4d8;
  border-radius: 4px;
}
.spin input {
  flex: 1;
  min-width: 0;
  padding: 0 0 0 3px;
  border: 0;
  font: inherit;
  font-size: 16px;
  color: #333;
  background: none;
  appearance: textfield;
}
.spin input::-webkit-inner-spin-button { display: none; }
.arrows { display: flex; flex-direction: column; gap: 5px; padding: 4px 1px 0 0; color: #707070; }
.arrows svg { width: 12px; height: 8px; }

.work { flex: 1; display: flex; min-height: 0; }
.editor { flex: 1; display: flex; flex-direction: column; min-width: 0; }
.doctabs { display: flex; height: 30px; border-bottom: 1px solid #ddd; }
.doctab {
  display: flex;
  align-items: center;
  padding: 0 14px 0 9px;
  background: #d9d9d9;
  border-right: 1px solid #ccc;
  line-height: 28px;
  color: #333;
}
.docicon { width: 16px; height: 18px; stroke-width: 1; margin-right: 11px; }
.doctab button { margin-left: 15px; color: #999; }
.stage {
  flex: 1;
  display: grid;
  grid-template-columns: 1fr 11px;
  grid-template-rows: 1fr 11px;
  min-height: 0;
}
.canvas { position: relative; overflow: hidden; background: #fcfcfc; }
.wires { width: 100%; height: 100%; stroke: none; }
.node {
  position: absolute;
  font-family: "Noto Sans CJK SC", sans-serif;
  font-size: 60px;
  line-height: 80px;
  font-weight: 700;
  color: #454545;
  white-space: nowrap;
}
.root { left: 59px; top: 272px; padding: 23px 53px 25px; border-radius: 64px; background: #fff; }
.n1 { left: 785px; top: -41px; }
.n2 { left: 504px; top: 91px; }
.n3 { left: 690px; top: 195px; }
.n4 { left: 690px; top: 295px; }
.n5 { left: 690px; top: 395px; }
.n6 { left: 504px; top: 527px; }
.n7 { left: 662px; top: 631px; }
.vtrack { background: #f4f4f4; display: flex; flex-direction: column; }
.vtrack::before { content: ""; flex: 259; }
.vtrack::after { content: ""; flex: 264; }
.vthumb { flex: 139; border-radius: 5px; background: #d2d2d2; }
.htrack { background: #f4f4f4; display: flex; }
.htrack::before { content: ""; flex: 232; }
.htrack::after { content: ""; flex: 633; }
.hthumb { flex: 293; border-radius: 5px; background: #d2d2d2; }

.panel { width: 361px; display: flex; flex-direction: column; color: #444; }
.phead { display: flex; justify-content: space-between; align-items: center; height: 30px; padding: 0 8px 0 6px; }
.phead h2 { font-size: 18px; line-height: 30px; color: #333; }
.pinicon { width: 12px; height: 14px; stroke-width: 2; }
.pbody { flex: 1; display: flex; min-height: 0; }
.rail {
  display: flex;
  flex-direction: column;
  gap: 22px;
  width: 40px;
  margin-top: 18px;
  padding-left: 1px;
  border-right: 1px solid #ddd;
}
.rail button { display: grid; place-items: center; width: 37px; height: 37px; }
.rail .on { background: #d9d9d9; }
.pcol { flex: 1; display: flex; flex-direction: column; min-width: 0; }
.props { flex: 1; padding: 0 15px 0 7px; }
.row { display: flex; height: 24px; }
.row.first { height: 69px; padding-top: 27px; border-bottom: 1px dashed #ccc; margin-bottom: 31px; }
.row.first .opt { height: 24px; }
.opt { display: flex; align-items: center; justify-content: space-between; width: 73px; padding: 0 8px 0 22px; }
.opt .caret { width: 7px; height: 4px; color: #808080; }
.props h3 { font-size: 16px; line-height: 28px; font-weight: 700; color: #333; margin-bottom: 14px; }
.row + h3 { margin-top: 53px; }
.row.first + h3 { margin-top: 0; }
.aa { font-size: 24px; line-height: 24px; }
.seg { display: inline-flex; border: 1px solid #f0f0f0; margin-left: 12px; height: 45px; }
.seg button { display: grid; place-items: center; width: 67px; }
.seg button:last-child { width: 70px; padding-right: 3px; }
.seg .on { background: #e0e0e0; }
.props .seg + h3 { margin-top: 43px; }
.props h3:has(+ .seg) { margin-bottom: 5px; }
.ptrack { height: 11px; padding: 0 4px 0 7px; background: #f8f8f8; }
.pthumb { height: 11px; border-radius: 5px; background: #d2d2d2; }
.pvtrack { width: 9px; margin-bottom: 11px; background: #f4f4f4; display: flex; flex-direction: column; }
.pvtrack::after { content: ""; flex: 142; }
.pvthumb { flex: 520; border-radius: 5px; background: #d2d2d2; }

.status {
  display: flex;
  align-items: center;
  height: 40px;
  padding-bottom: 2px;
  border-top: 1px solid #d8d8d8;
  color: #444;
  position: relative;
}
.status .i18 { stroke-width: 1.5; }
.pagesbtn { width: 57px; display: grid; place-items: center; }
.pagesicon { width: 20px; height: 18px; stroke-width: 1.5; }
.pagepick { display: flex; align-items: center; justify-content: space-between; width: 133px; height: 26px; padding: 0 4px; border: solid #ccc; border-width: 0 1px; }
.pagepick select { appearance: none; border: 0; padding: 0; font: inherit; color: #333; background: none; }
.pagepick svg { width: 12px; height: 8px; color: #777; }
.addpage { display: grid; place-items: center; width: 50px; height: 26px; border-right: 1px solid #ccc; color: #666; }
.pagetab { width: 96px; height: 26px; border-right: 1px solid #ccc; font-weight: 700; color: #17a374; }
.count { display: flex; gap: 16px; margin-left: auto; }
.view { display: flex; align-items: center; gap: 25px; margin-left: 67px; padding-right: 38px; }
.strong { color: #555; }
.zoom { display: flex; align-items: center; gap: 7px; margin-left: -3px; color: #555; }
.zoom input { appearance: none; width: 114px; height: 16px; margin: 0; background: linear-gradient(#999, #999) center / 100% 2px no-repeat; }
.zoom input::-webkit-slider-thumb { appearance: none; width: 7px; height: 16px; border: 1px solid #777; background: #fff; }
.zoom input::-moz-range-thumb { width: 7px; height: 16px; border: 1px solid #777; border-radius: 0; background: #fff; }
.pct { display: flex; align-items: center; gap: 6px; margin-left: -13px; margin-right: -5px; }
.pct .caret { width: 7px; height: 5px; color: #777; }
.grip {
  position: absolute;
  right: 0;
  bottom: 1px;
  width: 10px;
  height: 10px;
  background: radial-gradient(circle at 1px 1px, #bbb 1px, transparent 1px) 0 0 / 4px 4px;
  clip-path: polygon(100% 0, 100% 100%, 0 100%);
}
```
